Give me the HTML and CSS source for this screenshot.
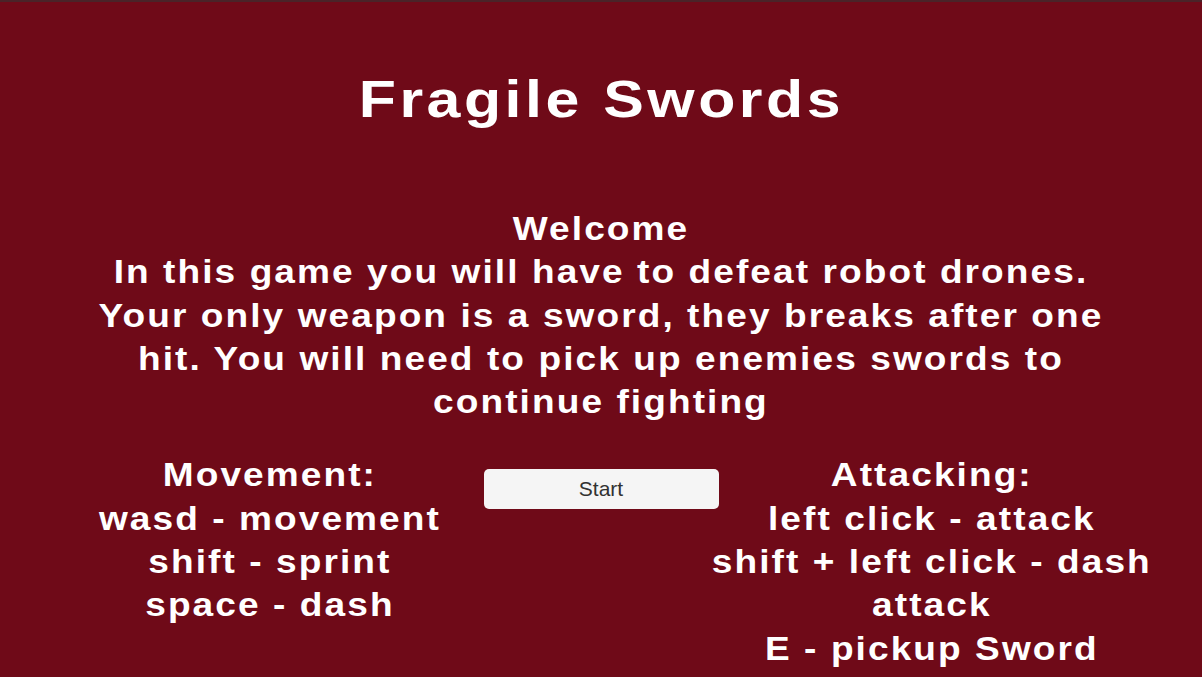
FILE: index.html
```html
<!DOCTYPE html>
<html lang="en">
<head>
<meta charset="utf-8">
<title>Fragile Swords</title>
<link rel="stylesheet" href="styles.css">
</head>
<body>
<main class="menu">
  <h1 class="title">Fragile Swords</h1>
  <p class="intro">Welcome<br>In this game you will have to defeat robot drones.<br>Your only weapon is a sword, they breaks after one<br>hit. You will need to pick up enemies swords to<br>continue fighting</p>
  <section class="controls">
    <div class="col">
      <p class="keys">Movement:<br>wasd - movement<br>shift - sprint<br>space - dash</p>
    </div>
    <div class="center">
      <button class="start" type="button">Start</button>
    </div>
    <div class="col">
      <p class="keys">Attacking:<br>left click - attack<br>shift + left click - dash<br>attack<br>E - pickup Sword</p>
    </div>
  </section>
</main>
</body>
</html>
```
FILE: styles.css
```css
html, body {
  margin: 0;
  height: 100%;
}

body {
  background: #6f0a18;
  color: #ffffff;
  font-family: "Liberation Sans", Arial, sans-serif;
  overflow: hidden;
  border-top: 2px solid #4a2328;
  box-sizing: border-box;
}

.menu {
  display: flex;
  flex-direction: column;
  align-items: center;
}

/* the game font is drawn a little wide, so the text is stretched horizontally */
.title {
  margin: 67px 0 0;
  font-size: 52px;
  line-height: 60px;
  font-weight: 700;
  letter-spacing: 3px;
  white-space: nowrap;
  transform: scaleX(1.17);
}

.intro {
  margin: 78px 0 0;
  font-size: 34px;
  line-height: 43.3px;
  font-weight: 700;
  letter-spacing: 1.9px;
  text-align: center;
  white-space: nowrap;
  transform: scaleX(1.09);
}

.controls {
  display: grid;
  grid-template-columns: 420px 235px 420px;
  column-gap: 3.5px;
  align-items: start;
  margin-top: 30px;
}

.col {
  display: flex;
  flex-direction: column;
  align-items: center;
}

.keys {
  margin: 0;
  font-size: 34px;
  line-height: 43.3px;
  font-weight: 700;
  letter-spacing: 1.9px;
  text-align: center;
  white-space: nowrap;
  transform: scaleX(1.09);
}

.center {
  padding-top: 16px;
}

.start {
  display: block;
  width: 235px;
  height: 40px;
  border: none;
  border-radius: 5px;
  background: #f5f5f5;
  color: #323232;
  font-family: "Liberation Sans", Arial, sans-serif;
  font-size: 21px;
  padding: 0;
}
```
